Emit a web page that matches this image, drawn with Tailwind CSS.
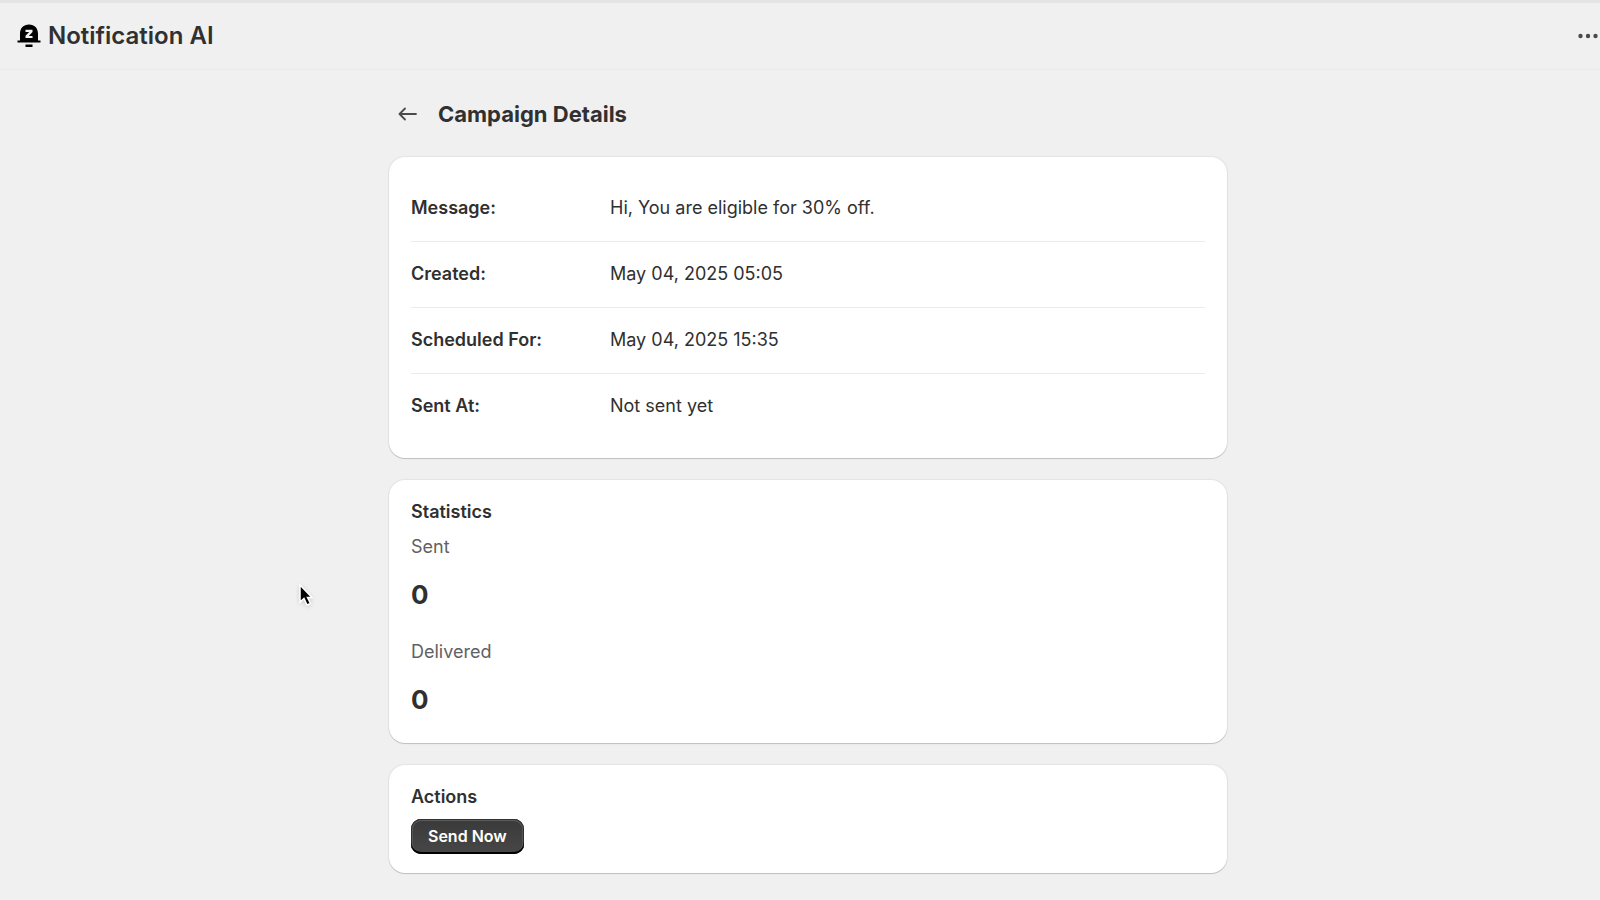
<!DOCTYPE html>
<html lang="en">

<head>
    <meta charset="UTF-8">
    <meta name="viewport" content="width=device-width, initial-scale=1.0">
    <title>Notification AI</title>
    <script src="https://cdn.jsdelivr.net/npm/@tailwindcss/browser@4"></script>
</head>

<body class="bg-[#f0f0f0] min-h-screen font-[Inter,sans-serif] text-[18px] leading-6 text-[#303030] overflow-x-hidden">
    <!-- App header -->
    <header class="flex items-center justify-between h-[70px] pl-[17px] border-t-3 border-t-[#e4e4e4] border-b border-b-[#ebebeb]">
        <div class="flex items-center gap-[7px]">
            <svg class="size-6" viewBox="0 0 24 24" aria-hidden="true">
                <path d="M3 16.500V10C3 4 6.500 .5 12 .5s9 3.500 9 9.500v6.500h2.500v2H.5v-2Z" fill="#000" />
                <path d="M8.500 20.500h7v2.500h-7Z" fill="#000" />
                <path d="M8.500 5.800h7v2.200l-3.700 3.900h3.700v2.100h-7v-2.200l3.700-3.900H8.500Z" fill="#f0f0f0" />
            </svg>
            <h1 class="text-[24px] leading-8 font-semibold">Notification AI</h1>
        </div>
        <button type="button" aria-label="More actions" class="flex items-center px-[2px] h-8">
            <svg class="w-5 h-5" viewBox="0 0 20 20" fill="#4a4a4a">
                <circle cx="2.500" cy="10" r="2.200" />
                <circle cx="10" cy="10" r="2.200" />
                <circle cx="17.500" cy="10" r="2.200" />
            </svg>
        </button>
    </header>

    <main class="pl-4">
        <div class="max-w-[838px] mx-auto">
            <!-- Page title -->
            <div class="flex items-center gap-[17px] h-[87px] pl-[6px]">
                <button type="button" aria-label="Back" class="p-[2px]">
                    <svg class="w-[22px] h-[22px]" viewBox="0 0 22 22" fill="none" stroke="#4a4a4a" stroke-width="1.800" stroke-linecap="round" stroke-linejoin="round">
                        <path d="M19 11H2.500M8 5.500L2.500 11L8 16.500" />
                    </svg>
                </button>
                <h2 class="text-[22px] leading-8 font-bold">Campaign Details</h2>
            </div>

            <div class="flex flex-col gap-[22px]">
                <!-- Details -->
                <section class="bg-white rounded-2xl px-[22px] py-[19px] shadow-[0_1px_1px_#0000002b,0_0_1px_1px_#0000000d]">
                    <dl class="divide-y divide-[#ebebeb]">
                        <div class="flex pt-5 pb-[21px]">
                            <dt class="w-[199px] font-semibold">Message:</dt>
                            <dd>Hi, You are eligible for 30% off.</dd>
                        </div>
                        <div class="flex pt-5 pb-[21px]">
                            <dt class="w-[199px] font-semibold">Created:</dt>
                            <dd>May 04, 2025 05:05</dd>
                        </div>
                        <div class="flex pt-5 pb-[21px]">
                            <dt class="w-[199px] font-semibold">Scheduled For:</dt>
                            <dd>May 04, 2025 15:35</dd>
                        </div>
                        <div class="flex pt-5 pb-[21px]">
                            <dt class="w-[199px] font-semibold">Sent At:</dt>
                            <dd>Not sent yet</dd>
                        </div>
                    </dl>
                </section>

                <!-- Statistics -->
                <section class="bg-white rounded-2xl px-[22px] pt-5 pb-[27px] shadow-[0_1px_1px_#0000002b,0_0_1px_1px_#0000000d]">
                    <h3 class="font-semibold mb-[11px]">Statistics</h3>
                    <dl class="flex flex-col gap-[29px]">
                        <div>
                            <dt class="text-[#616161] mb-5">Sent</dt>
                            <dd class="text-[26px] leading-8 font-bold">0</dd>
                        </div>
                        <div>
                            <dt class="text-[#616161] mb-5">Delivered</dt>
                            <dd class="text-[26px] leading-8 font-bold">0</dd>
                        </div>
                    </dl>
                </section>

                <!-- Actions -->
                <section class="bg-white rounded-2xl px-[22px] pt-5 pb-[19px] shadow-[0_1px_1px_#0000002b,0_0_1px_1px_#0000000d]">
                    <h3 class="font-semibold mb-[10px]">Actions</h3>
                    <button type="button" class="block h-[35px] px-[17px] pb-[2px] rounded-[10px] bg-linear-to-b from-[#3a3a3a] to-[#474747] text-[16px] leading-6 font-semibold text-white shadow-[inset_0_-2px_0_#000000,inset_0_0_0_1px_#303030,inset_0_1px_0_1px_#5c5c5c,inset_0_0_0_2px_#555555]">Send Now</button>
                </section>
            </div>
        </div>
    </main>

    <!-- Mouse pointer -->
    <svg class="absolute left-[297px] top-[582px] w-[18px] h-7 drop-shadow-sm" viewBox="0 0 18 28" aria-hidden="true">
        <path d="M3 3v17l4-3.500l3 6.500l3.500-1.500l-3-6H15Z" fill="#000" stroke="#fff" stroke-width="1.500" />
    </svg>
</body>

</html>
